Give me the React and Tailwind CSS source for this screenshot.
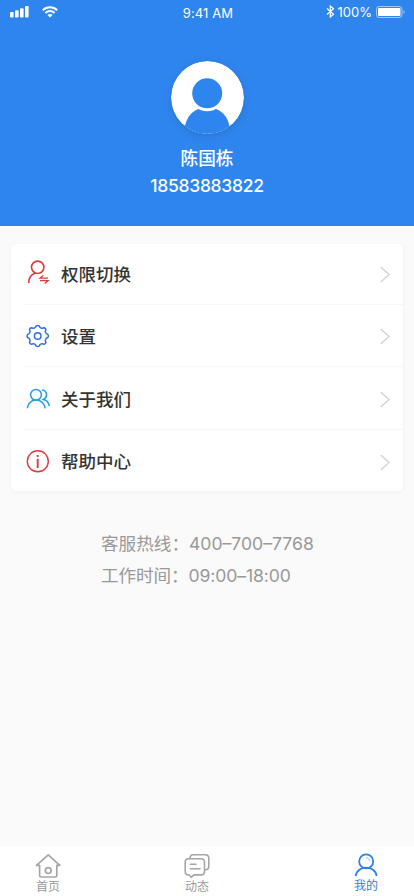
import React from "react";

const SwitchIcon = () => (
  <svg width="24" height="24" viewBox="0 0 24 24" fill="none" stroke="#dc3b3e" strokeWidth="1.6" overflow="visible">
    <circle cx="11.7" cy="5.3" r="6.2" />
    <path d="M2.7 21C2.8 16 5.5 12.3 9.6 11.1" />
    <path d="M22 16.1H14L17.3 13.4M14 18.7H22L18.8 21.4" strokeWidth="1.3" />
  </svg>
);

const GearIcon = () => (
  <svg width="24" height="24" viewBox="0 0 24 24" fill="none" stroke="#2f6fdb" strokeWidth="1.5" strokeLinejoin="round">
    <circle cx="11.7" cy="12" r="3.3" />
    <path d="M10.2 1.8Q11.7 1 13.2 1.8A3.1 3.1 0 0 0 18.1 3.7Q19.6 4.1 20 5.6A3.1 3.1 0 0 0 21.9 10.5Q22.7 12 21.9 13.5A3.1 3.1 0 0 0 20 18.4Q19.6 19.9 18.1 20.3A3.1 3.1 0 0 0 13.2 22.2Q11.7 23 10.2 22.2A3.1 3.1 0 0 0 5.3 20.3Q3.8 19.9 3.4 18.4A3.1 3.1 0 0 0 1.5 13.5Q.7 12 1.5 10.5A3.1 3.1 0 0 0 3.4 5.6Q3.8 4.1 5.3 3.7A3.1 3.1 0 0 0 10.2 1.8Z" />
  </svg>
);

const UsersIcon = () => (
  <svg width="24" height="24" viewBox="0 0 24 24" fill="none" stroke="#259fdc" strokeWidth="1.5">
    <circle cx="10" cy="7.8" r="5.4" />
    <path d="M1.3 21.3C2.3 10.3 17.7 10.3 19.3 21.3" />
    <path d="M16 2.9C21.5 3.5 22 10.3 17.4 12.4C20.8 13.2 22.7 15.5 23.4 19" />
  </svg>
);

const InfoIcon = () => (
  <svg width="24" height="24" viewBox="0 0 24 24" fill="none" stroke="#dc3b3e">
    <circle cx="11.8" cy="11.3" r="10.5" strokeWidth="1.4" />
    <path d="M11.7 4.9V6.9M11.7 8.8V18" strokeWidth="1.9" />
  </svg>
);

const HomeIcon = () => (
  <svg width="26" height="26" viewBox="0 0 26 26" fill="none" stroke="#a6a6a6" strokeWidth="1.7" strokeLinejoin="round" strokeLinecap="round">
    <path d="M4.6 13.3H1.5L13.2 2.8L24.9 13.3H21.8V23.5Q21.8 25 20.3 25H6.1Q4.6 25 4.6 23.5Z" />
    <circle cx="13.2" cy="18.6" r="2.9" />
  </svg>
);

const ChatIcon = () => (
  <svg width="26" height="26" viewBox="0 0 26 26" fill="none" stroke="#a6a6a6" strokeWidth="1.6" strokeLinejoin="round" strokeLinecap="round">
    <path d="M5.8 6.3Q6.3 2.7 9.3 2.7H21.2Q24.8 2.7 24.8 6.2V14.4Q24.8 17.5 21.3 17.8" />
    <path d="M4.7 6.8H17Q20.5 6.8 20.5 10.3V19.4Q20.5 22.9 17 22.9H9.9L7.2 25.3L5.2 22.9H4.7Q1.2 22.9 1.2 19.4V10.3Q1.2 6.8 4.7 6.8Z" />
    <path d="M6.5 12.3H12M6.5 16.7H16" />
  </svg>
);

const MineIcon = () => (
  <svg width="26" height="26" viewBox="0 0 26 26" fill="none" stroke="#3180e4" strokeWidth="1.8">
    <circle cx="13.2" cy="9.4" r="7" />
    <path d="M2.7 24C4.3 12.9 22.1 12.9 23.7 24" />
    <path d="M12.9 5.8Q16.3 6 16.8 9.3" stroke="#b9d8fb" strokeWidth="1.4" />
  </svg>
);

const rows = [
  { label: "权限切换", Icon: SwitchIcon, height: "h-[61px]", pad: "", textPad: "pt-px" },
  { label: "设置", Icon: GearIcon, height: "h-[62px]", pad: "", textPad: "pt-[2px]" },
  { label: "关于我们", Icon: UsersIcon, height: "h-[63px]", pad: "pt-[2px]", textPad: "pt-px" },
  { label: "帮助中心", Icon: InfoIcon, height: "h-[61px]", pad: "pt-[2px]", textPad: "pt-px" },
];

const tabs = [
  { label: "首页", Icon: HomeIcon, color: "text-[#999]", gap: "mt-px" },
  { label: "动态", Icon: ChatIcon, color: "text-[#999]", gap: "mt-px" },
  { label: "我的", Icon: MineIcon, color: "text-[#3180e4]", gap: "" },
];

const StatusBar = () => (
  <div className="grid grid-cols-3 items-center h-[26px] pl-[10px] pr-2 text-[13px]">
    <div className="flex items-center gap-[13px] pb-[2px]">
      <svg width="19" height="12" viewBox="0 0 19 12" fill="#fff">
        <rect x="0" y="6" width="3.6" height="5.5" rx="1" />
        <rect x="5" y="4.3" width="3.6" height="7.2" rx="1" />
        <rect x="10" y="2.2" width="3.6" height="9.3" rx="1" />
        <rect x="15" y="0" width="3.6" height="11.5" rx="1" />
      </svg>
      <svg width="16" height="12" viewBox="0 0 16 12" fill="none" stroke="#fff" strokeWidth="2">
        <path d="M.8 4.2C4.8 .2 11.2 .2 15.2 4.2M3.4 7C6 4.4 10 4.4 12.6 7" />
        <path d="M5.5 9Q8 7 10.5 9L8 11.6Z" fill="#fff" stroke="none" />
      </svg>
    </div>
    <span className="pt-px text-center tracking-[0.1px]">9:41 AM</span>
    <div className="flex items-center justify-end pb-[2px]">
      <svg className="-mt-px" width="9" height="13" viewBox="0 0 9 13" fill="none" stroke="#fff" strokeWidth="1.2">
        <path d="M1 3.5L7.5 9.3L4.3 12V1L7.5 3.7L1 9.5" />
      </svg>
      <span className="pt-px ml-[3px] mr-1">100%</span>
      <svg width="30" height="12" viewBox="0 0 30 12">
        <rect x=".5" y=".5" width="25.5" height="11" rx="2.8" fill="none" stroke="#fff" strokeOpacity=".55" />
        <rect x="2" y="2" width="22.5" height="8" rx="1" fill="#fff" />
        <path d="M27.5 4.3Q30 6 27.5 7.8Z" fill="#fff" fillOpacity=".55" />
      </svg>
    </div>
  </div>
);

const Avatar = () => (
  <svg className="rounded-full shadow-[0_2px_8px_rgba(0,0,0,0.12)]" width="73" height="73" viewBox="0 0 73 73">
    <clipPath id="disc">
      <circle cx="36.5" cy="36.5" r="36.5" />
    </clipPath>
    <g clipPath="url(#disc)">
      <rect width="73" height="73" fill="#fff" />
      <circle cx="36.2" cy="68.5" r="22.5" fill="#2f85ee" />
      <circle cx="36.2" cy="32.3" r="18" fill="#fff" />
      <circle cx="36.2" cy="32.3" r="15" fill="#2f85ee" />
    </g>
  </svg>
);

const App = () => {
  return (
    <div className="flex flex-col w-[414px] h-[896px] overflow-hidden bg-[#fafafa] font-[Inter,'Noto_Sans_CJK_SC',sans-serif]">
      <header className="h-[226px] shrink-0 bg-[#2f85ee] text-white">
        <StatusBar />
        <div className="flex flex-col items-center pt-[35px]">
          <Avatar />
          <h1 className="mt-[11px] text-[17.7px] leading-[28px] font-medium">陈国栋</h1>
          <p className="text-[17.5px] leading-[25px] font-medium tracking-[-0.3px]">18583883822</p>
        </div>
      </header>

      <main className="flex-1">
        <ul className="mx-[11px] mt-[18px] h-[247px] rounded-[5px] bg-white shadow-[0_1px_5px_rgba(0,0,0,0.04)]">
          {rows.map(({ label, Icon, height, pad, textPad }, i) => (
            <li key={label} className={`${height} pl-[13px]`}>
              <div className={`flex items-center h-full pl-[2px] pr-[13px] ${pad} ${i < 3 ? "border-b border-[#f7f7f7]" : ""}`}>
                <Icon />
                <span className={`ml-[11px] flex-1 text-[17.5px] leading-[26px] font-medium text-[#333] ${textPad}`}>{label}</span>
                <svg className="translate-y-[0.5px]" width="10" height="16" viewBox="0 0 10 16" fill="none" stroke="#cfcfcf" strokeWidth="1.2">
                  <path d="M.7 .5L9.2 8L.7 15.5" />
                </svg>
              </div>
            </li>
          ))}
        </ul>
        <div className="mt-[37px] ml-[101px] text-[17.6px] leading-[32px] text-[#999]">
          <p>客服热线：400–700–7768</p>
          <p className="tracking-[-0.1px]">工作时间：09:00–18:00</p>
        </div>
      </main>

      <nav className="flex h-[50px] pl-[35px] bg-white">
        {tabs.map(({ label, Icon, color, gap }, i) => (
          <div key={label} className={`flex flex-col items-center w-[26px] pt-[6px] ${color} ${i === 0 ? "mr-[123px]" : ""} ${i === 1 ? "mr-[143px]" : ""}`}>
            <Icon />
            <span className={`text-[12px] leading-[16px] whitespace-nowrap ${gap}`}>{label}</span>
          </div>
        ))}
      </nav>
    </div>
  );
};

export default App;
